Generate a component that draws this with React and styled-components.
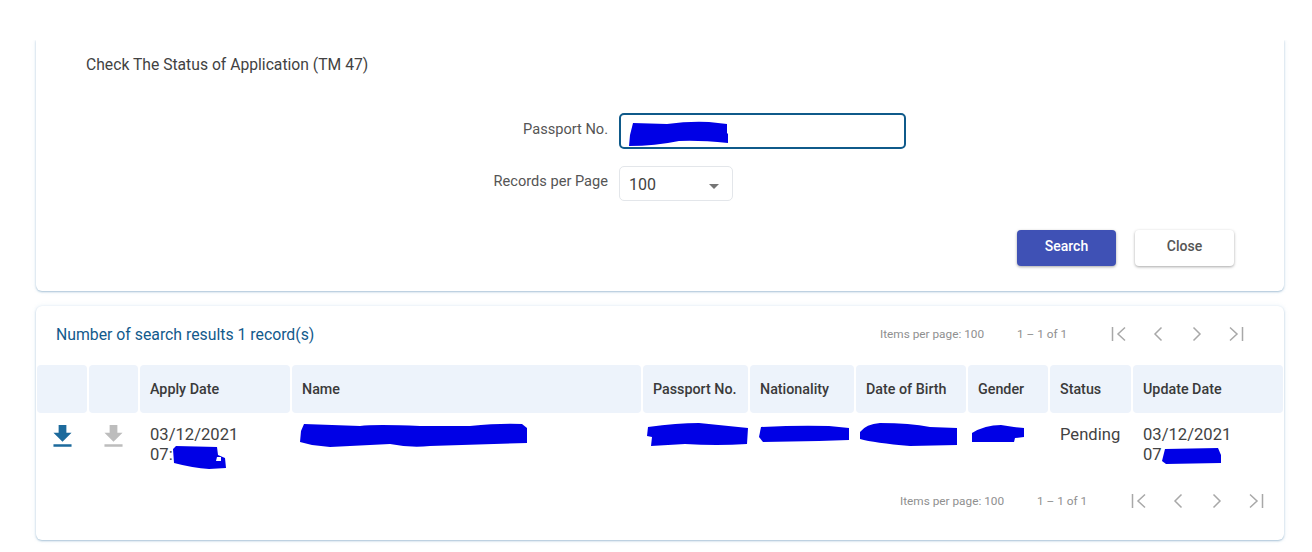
import React from "react"
import styled, { createGlobalStyle } from "styled-components"
import { MdFileDownload } from "react-icons/md"

const GlobalStyle = createGlobalStyle`
  html, body {
    margin: 0;
    background: #ffffff;
  }
  body {
    font-family: Roboto, "Liberation Sans", sans-serif;
    color: #424242;
  }
`

const COLUMNS = "50px 49px 150px 349px 105px 104px 110px 80px 81px 150px"

const HEADERS = [
  "",
  "",
  "Apply Date",
  "Name",
  "Passport No.",
  "Nationality",
  "Date of Birth",
  "Gender",
  "Status",
  "Update Date",
]

// hand-painted redaction marks from the reference
const Scribble = ({ w, h, d, className }) => (
  <ScribbleSvg className={className} width={w} height={h} viewBox={`0 0 ${w} ${h}`}>
    <path d={d} fill="#0000e6" />
  </ScribbleSvg>
)

const PagerIcon = ({ kind }) => (
  <svg width="18" height="18" viewBox="0 0 18 18" fill="none" stroke="#a8a8a8" strokeWidth="1.5">
    {kind === "first" && <path d="M2.5 2v14M15 2.5 8 9l7 6.5" />}
    {kind === "prev" && <path d="M12.5 2.5 6 9l6.5 6.5" />}
    {kind === "next" && <path d="M5.5 2.5 12 9l-6.5 6.5" />}
    {kind === "last" && <path d="M15.5 2v14M3 2.5 10 9l-7 6.5" />}
  </svg>
)

const Paginator = () => (
  <Pager>
    <PagerText>Items per page: 100</PagerText>
    <PagerRange>1 – 1 of 1</PagerRange>
    <PagerIcons>
      <PagerIcon kind="first" />
      <PagerIcon kind="prev" />
      <PagerIcon kind="next" />
      <PagerIcon kind="last" />
    </PagerIcons>
  </Pager>
)

const App = () => (
  <Page>
    <GlobalStyle />
    <SearchCard>
      <Title>Check The Status of Application (TM 47)</Title>
      <Form>
        <PassportLabel>Passport No.</PassportLabel>
        <PassportInput>
          <Scribble
            w={100}
            h={26}
            d="M4 2 L38 3 Q60 0 80 1 L98 3 L98 12 L99 13 L99 22 Q70 19 50 20 Q26 25 0 25 L1 14 Z"
          />
        </PassportInput>
        <Label>Records per Page</Label>
        <Select>
          100
          <Caret />
        </Select>
      </Form>
      <Actions>
        <SearchButton>Search</SearchButton>
        <CloseButton>Close</CloseButton>
      </Actions>
    </SearchCard>

    <ResultCard>
      <ResultTop>
        <ResultTitle>Number of search results 1 record(s)</ResultTitle>
        <Paginator />
      </ResultTop>

      <HeadRow>
        {HEADERS.map((h, i) => (
          <HeadCell key={i}>{h}</HeadCell>
        ))}
      </HeadRow>

      <BodyRow>
        <IconCell>
          <MdFileDownload size={31} color="#1c6a9c" />
        </IconCell>
        <IconCell>
          <MdFileDownload size={31} color="#bdbdbd" />
        </IconCell>
        <Cell>
          03/12/2021
          <br />
          07:
          <TimeMark
            w={53}
            h={24}
            d="M0 3 L3 0 L44 1 L45 9 L52 12 L53 22 L36 23 Q20 22 1 17 Z M43 15 L48 15 L48 11 L44 11 Z"
          />
        </Cell>
        <MarkCell $left={8}>
          <Scribble
            w={227}
            h={25}
            d="M4 1 L60 3 Q75 1 120 3 L170 3 Q200 0 222 1 L227 5 L227 20 L130 23 Q110 25 90 21 L30 24 L12 22 L0 19 L1 8 Z"
          />
        </MarkCell>
        <MarkCell $left={4}>
          <Scribble
            w={102}
            h={23}
            d="M1 4 Q30 0 52 0 L101 5 L100 21 Q70 23 38 21 L4 23 L5 14 L0 13 Z"
          />
        </MarkCell>
        <MarkCell $left={9} $top={2}>
          <Scribble w={91} h={18} d="M2 2 Q40 0 70 1 L90 3 L90 15 L60 16 L4 17 L0 12 Z" />
        </MarkCell>
        <MarkCell $left={4}>
          <Scribble
            w={98}
            h={23}
            d="M0 9 Q6 1 20 0 Q50 0 70 4 L97 5 L97 22 L50 23 Q14 20 0 16 Z"
          />
        </MarkCell>
        <MarkCell $left={3} $top={2}>
          <Scribble w={54} h={18} d="M1 8 Q14 0 30 0 L43 2 L53 3 L53 12 L44 13 L43 17 L14 17 L1 17 Z" />
        </MarkCell>
        <Cell>Pending</Cell>
        <Cell>
          03/12/2021
          <br />
          07
          <UpdateMark w={60} h={18} d="M3 2 L56 1 L59 8 L59 16 L4 17 L0 14 Z" />
        </Cell>
      </BodyRow>

      <BottomPager>
        <Paginator />
      </BottomPager>
    </ResultCard>
  </Page>
)

export default App

const Page = styled.div`
  width: 1312px;
  height: 552px;
  box-sizing: border-box;
  padding: 40px 28px 0 36px;
  overflow: hidden;
`

const Card = styled.section`
  background: #fff;
  border-radius: 6px;
  box-shadow: 0 1px 2px rgba(120, 160, 190, 0.6), 0 0 4px rgba(170, 200, 230, 0.3);
`

const SearchCard = styled(Card)`
  height: 251px;
  box-sizing: border-box;
  padding: 15px 50px 0;
  border-radius: 0 0 6px 6px;
  clip-path: inset(0 -6px -6px -6px);
`

const Title = styled.div`
  font-size: 15.7px;
  line-height: 20px;
  color: #424242;
`

const Form = styled.div`
  display: grid;
  grid-template-columns: 522px auto;
  justify-content: start;
  column-gap: 11px;
  row-gap: 17px;
  margin-top: 38px;
`

const Label = styled.div`
  justify-self: end;
  align-self: start;
  font-size: 14.6px;
  line-height: 18px;
  margin-top: 6px;
  color: #555;
`

const PassportLabel = styled(Label)`
  margin-top: 7px;
`

const PassportInput = styled.div`
  width: 287px;
  height: 36px;
  box-sizing: border-box;
  border: 2px solid #0f5a8a;
  border-radius: 5px;
  padding: 6px 0 0 8px;
`

const ScribbleSvg = styled.svg`
  display: block;
`

const Select = styled.div`
  width: 114px;
  height: 35px;
  box-sizing: border-box;
  border: 1px solid #e3e6ea;
  border-radius: 5px;
  padding: 2px 18px 0 9px;
  display: flex;
  align-items: center;
  justify-content: space-between;
  font-size: 16px;
  color: #424242;
`

const Caret = styled.span`
  width: 0;
  height: 0;
  margin-top: 3px;
  border-left: 5px solid transparent;
  border-right: 5px solid transparent;
  border-top: 5px solid #757575;
  margin-right: -5px;
`

const Actions = styled.div`
  display: flex;
  justify-content: flex-end;
  gap: 19px;
  margin-top: 29px;
`

const Button = styled.button`
  width: 99px;
  height: 36px;
  border: 0;
  border-radius: 4px;
  padding: 0 0 4px;
  font-family: inherit;
  font-size: 14px;
  font-weight: 500;
  box-shadow: 0 1px 3px rgba(0, 0, 0, 0.35);
`

const SearchButton = styled(Button)`
  background: #3f51b5;
  color: #fff;
`

const CloseButton = styled(Button)`
  background: #fff;
  color: #555;
`

const ResultCard = styled(Card)`
  height: 234px;
  margin-top: 15px;
  box-sizing: border-box;
  padding: 0 1px;
`

const ResultTop = styled.div`
  display: flex;
  align-items: center;
  justify-content: space-between;
  height: 59px;
  box-sizing: border-box;
  padding: 0 0 3px 19px;
`

const ResultTitle = styled.div`
  font-size: 15.8px;
  color: #125a8c;
`

const Pager = styled.div`
  display: flex;
  align-items: center;
  margin-right: 38px;
  color: #8f8f8f;
  font-size: 11.8px;
`

const PagerText = styled.span`
  width: 137px;
`

const PagerRange = styled.span`
  width: 93px;
`

const PagerIcons = styled.div`
  display: flex;
  gap: 21px;
`

const HeadRow = styled.div`
  display: grid;
  grid-template-columns: ${COLUMNS};
  column-gap: 2px;
  height: 48px;
`

const HeadCell = styled.div`
  background: #edf3fb;
  border-radius: 4px;
  padding-left: 10px;
  display: flex;
  align-items: center;
  font-size: 14.3px;
  font-weight: 500;
  color: #3a3a3a;
`

const BodyRow = styled.div`
  display: grid;
  grid-template-columns: ${COLUMNS};
  column-gap: 2px;
  height: 72px;
`

const Cell = styled.div`
  padding: 12px 0 0 10px;
  font-size: 16.6px;
  line-height: 20px;
  color: #424242;
  white-space: nowrap;
`

const IconCell = styled.div`
  display: flex;
  justify-content: center;
  padding-top: 8px;
`

const MarkCell = styled.div`
  padding: ${props => 10 + (props.$top || 0)}px 0 0 ${props => props.$left}px;
`

const TimeMark = styled(Scribble)`
  display: inline-block;
  vertical-align: top;
  margin: 1px 0 0 0;
`

const UpdateMark = styled(Scribble)`
  display: inline-block;
  vertical-align: top;
  margin: 2px 0 0 0;
`

const BottomPager = styled.div`
  display: flex;
  justify-content: flex-end;
  align-items: center;
  height: 32px;
  margin-right: -20px;
`
